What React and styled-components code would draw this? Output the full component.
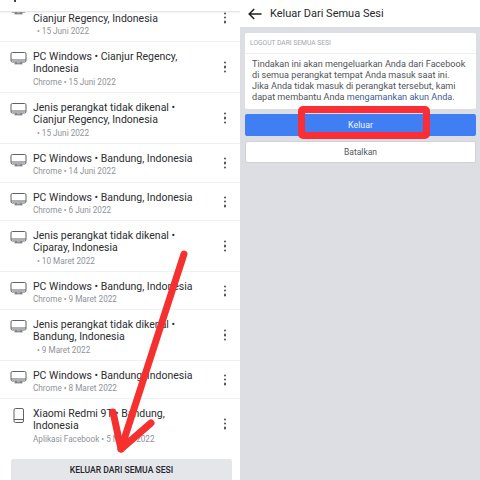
import React from 'react';
import styled, { createGlobalStyle } from 'styled-components';

const GlobalStyle = createGlobalStyle`
  html, body {
    margin: 0;
    padding: 0;
    background: #fff;
  }
  body {
    font-family: Roboto, "Liberation Sans", sans-serif;
  }
`;

const Screen = styled.div`
  position: relative;
  width: 480px;
  height: 480px;
  overflow: hidden;
  display: grid;
  grid-template-columns: 240px 240px;
`;

const LeftPanel = styled.section`
  display: flex;
  flex-direction: column;
  height: 480px;
  overflow: hidden;
  background: #fff;
`;

const TopStrip = styled.div`
  height: 11px;
  flex-shrink: 0;
  padding-left: 14px;
  border-bottom: 1px solid #e6e7ea;
  box-shadow: 0 1px 2px rgba(0, 0, 0, 0.06);
  background: #fff;
  position: relative;
  z-index: 1;
`;

const TopStripMark = styled.div`
  width: 2px;
  height: 2px;
  background: #444;
`;

const SessionRow = styled.div`
  display: flex;
  align-items: flex-start;
  height: ${(p) => p.$height}px;
  box-sizing: border-box;
  padding: ${(p) => (p.$clipped ? '1px 0 0 10px' : '9px 0 0 10px')};
  border-bottom: 1px solid ${(p) => (p.$last ? 'transparent' : '#f0f1f3')};
  position: relative;
  overflow: hidden;
  flex-shrink: 0;
`;

const DeviceIcon = styled.svg`
  width: 17px;
  height: 15px;
  margin-top: ${(p) => (p.$clipped ? -12 : 0)}px;
  flex-shrink: 0;
  color: #5d6169;
`;

const SessionText = styled.div`
  margin-left: 6px;
  width: 172px;
`;

const SessionTitle = styled.div`
  font-size: 10.5px;
  line-height: 12.3px;
  color: #2b2d31;
  white-space: pre-line;
`;

const SessionMeta = styled.div`
  font-size: 8.2px;
  line-height: 12px;
  color: #8f9299;
  white-space: pre;
`;

const Kebab = styled.div`
  position: absolute;
  right: 14px;
  top: ${(p) => (p.$clipped ? '5.5px' : '50%')};
  transform: translateY(-50%);
  display: flex;
  flex-direction: column;
  gap: 2px;
`;

const KebabDot = styled.span`
  width: 2.4px;
  height: 2.4px;
  border-radius: 50%;
  background: #4a4d53;
`;

const LogoutAll = styled.div`
  margin: 10px 8px 0 11px;
  height: 24px;
  flex-shrink: 0;
  background: #e5e6ea;
  border-radius: 2px 2px 0 0;
  display: flex;
  align-items: center;
  justify-content: center;
  padding-bottom: 2px;
  box-sizing: border-box;
  font-size: 8.6px;
  font-weight: 500;
  color: #23252a;
`;

const RightPanel = styled.section`
  display: flex;
  flex-direction: column;
  height: 480px;
  background: #dcdee3;
`;

const Header = styled.header`
  height: 27px;
  flex-shrink: 0;
  background: #fff;
  display: flex;
  align-items: center;
  padding-left: 8px;
  gap: 8px;
`;

const HeaderTitle = styled.div`
  font-size: 11px;
  color: #26282c;
`;

const Content = styled.div`
  display: flex;
  flex-direction: column;
  padding: 6px 4px 0 5px;
`;

const Card = styled.div`
  background: #fff;
  border-radius: 2px;
`;

const CardLabel = styled.div`
  height: 20px;
  display: flex;
  align-items: center;
  padding-left: 5px;
  font-size: 6.7px;
  color: #a3a6ab;
  border-bottom: 1px solid #eceef0;
`;

const CardBody = styled.p`
  margin: 0;
  padding: 5px 4px 6px 7px;
  font-size: 9.1px;
  line-height: 11px;
  color: #50535a;
  white-space: nowrap;
`;

const CardLink = styled.span`
  color: #3f5c93;
`;

const ActionButton = styled.div`
  height: 22px;
  margin-top: 5px;
  box-sizing: border-box;
  border-radius: 2px;
  display: flex;
  align-items: center;
  justify-content: center;
  font-size: ${(p) => (p.$primary ? 8.8 : 8.5)}px;
  background: ${(p) => (p.$primary ? '#3f7ff3' : '#fff')};
  color: ${(p) => (p.$primary ? '#f2f5fc' : '#55585e')};
  border: ${(p) => (p.$primary ? '0' : '1px solid #cfd1d6')};
`;

const Highlight = styled.div`
  position: absolute;
  left: 298px;
  top: 106px;
  width: 132px;
  height: 33px;
  box-sizing: border-box;
  border: 7px solid #fb2d35;
  border-radius: 5px;
`;

const ArrowOverlay = styled.svg`
  position: absolute;
  left: 0;
  top: 0;
  width: 480px;
  height: 480px;
  pointer-events: none;
`;

const sessions = [
  { title: 'Cianjur Regency, Indonesia', meta: '  • 15 Juni 2022', height: 30, clipped: true },
  { title: 'PC Windows • Cianjur Regency,\nIndonesia', meta: 'Chrome • 15 Juni 2022', height: 51 },
  { title: 'Jenis perangkat tidak dikenal •\nCianjur Regency, Indonesia', meta: '  • 15 Juni 2022', height: 51 },
  { title: 'PC Windows • Bandung, Indonesia', meta: 'Chrome • 14 Juni 2022', height: 39 },
  { title: 'PC Windows • Bandung, Indonesia', meta: 'Chrome • 6 Juni 2022', height: 38 },
  { title: 'Jenis perangkat tidak dikenal •\nCiparay, Indonesia', meta: '  • 10 Maret 2022', height: 51 },
  { title: 'PC Windows • Bandung, Indonesia', meta: 'Chrome • 9 Maret 2022', height: 38 },
  { title: 'Jenis perangkat tidak dikenal •\nBandung, Indonesia', meta: '  • 9 Maret 2022', height: 51 },
  { title: 'PC Windows • Bandung, Indonesia', meta: 'Chrome • 8 Maret 2022', height: 38 },
  { title: 'Xiaomi Redmi 9T • Bandung,\nIndonesia', meta: 'Aplikasi Facebook • 5 Maret 2022', height: 50, phone: true, last: true },
];

const Monitor = ({ clipped }) => (
  <DeviceIcon $clipped={clipped} viewBox="0 0 17 15" fill="none" stroke="currentColor" strokeWidth="1">
    <rect x="1" y="1.5" width="15" height="9.5" rx="1.4" />
    <path d="M1 9h15M6 11v1.6M11 11v1.6M4.5 12.8h8" />
  </DeviceIcon>
);

const Phone = () => (
  <DeviceIcon viewBox="0 0 17 15" fill="none" stroke="currentColor" strokeWidth="1">
    <rect x="4" y="0.5" width="9.5" height="14" rx="1.5" />
    <path d="M4 11.5h9.5" />
  </DeviceIcon>
);

const Session = ({ item }) => (
  <SessionRow $height={item.height} $clipped={item.clipped} $last={item.last}>
    {item.phone ? <Phone /> : <Monitor clipped={item.clipped} />}
    <SessionText>
      <SessionTitle>{item.title}</SessionTitle>
      <SessionMeta>{item.meta}</SessionMeta>
    </SessionText>
    <Kebab $clipped={item.clipped}>
      <KebabDot />
      <KebabDot />
      <KebabDot />
    </Kebab>
  </SessionRow>
);

export default function App() {
  return (
    <Screen>
      <GlobalStyle />
      <LeftPanel>
        <TopStrip>
          <TopStripMark />
        </TopStrip>
        {sessions.map((item, i) => (
          <Session key={i} item={item} />
        ))}
        <LogoutAll>KELUAR DARI SEMUA SESI</LogoutAll>
      </LeftPanel>

      <RightPanel>
        <Header>
          <svg width="14" height="12" viewBox="0 0 14 12" fill="none" stroke="#1f2125" strokeWidth="1.5">
            <path d="M13.5 6H1.2M6.2 1L1.2 6l5 5" />
          </svg>
          <HeaderTitle>Keluar Dari Semua Sesi</HeaderTitle>
        </Header>
        <Content>
          <Card>
            <CardLabel>LOGOUT DARI SEMUA SESI</CardLabel>
            <CardBody>
              Tindakan ini akan mengeluarkan Anda dari Facebook
              <br />
              di semua perangkat tempat Anda masuk saat ini.
              <br />
              Jika Anda tidak masuk di perangkat tersebut, kami
              <br />
              dapat membantu Anda <CardLink>mengamankan akun Anda</CardLink>.
            </CardBody>
          </Card>
          <ActionButton $primary>Keluar</ActionButton>
          <ActionButton>Batalkan</ActionButton>
        </Content>
      </RightPanel>

      <Highlight />
      <ArrowOverlay viewBox="0 0 480 480" fill="none" stroke="#f5302f" strokeLinecap="round" strokeLinejoin="round">
        <path d="M184 254L121 449" strokeWidth="7" />
        <path d="M113 412L121 449L151 423" strokeWidth="7" />
      </ArrowOverlay>
    </Screen>
  );
}
